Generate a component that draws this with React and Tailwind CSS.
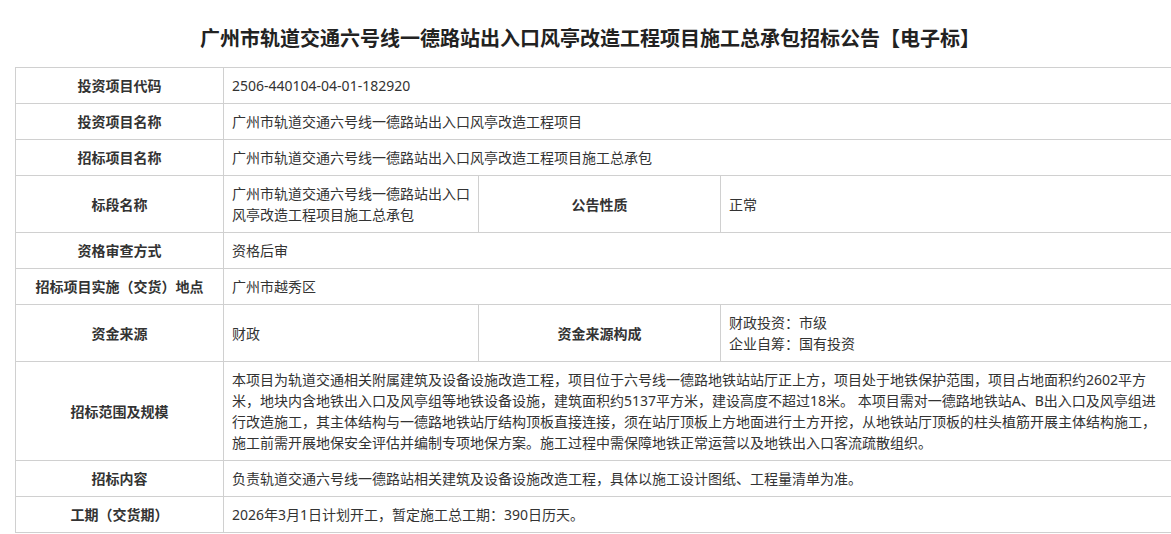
import React from 'react';

// 招标公告详情表
const th = 'border border-[#d0d0d0] px-2 py-[7px] text-center font-bold text-[#333] align-middle';
const td = 'border border-[#d0d0d0] px-2 py-[7px] text-left text-[#333] align-middle';

const App = () => {
    return (
        <div
            className="w-full overflow-hidden bg-white text-[14px] leading-[21px] text-[#333]"
            style={{ fontFamily: '"Noto Sans", "Noto Sans CJK SC", sans-serif' }}
        >
            <div className="ml-[15px] w-[1150px] pt-[24px]">
                <h1 className="text-center text-[20px] leading-[30px] font-bold text-[#222] mb-[13px]">
                    广州市轨道交通六号线一德路站出入口风亭改造工程项目施工总承包招标公告【电子标】
                </h1>
                <table className="w-[1158px] border-collapse table-fixed">
                    <colgroup>
                        <col className="w-[208px]" />
                        <col className="w-[255px]" />
                        <col className="w-[242px]" />
                        <col />
                    </colgroup>
                    <tbody>
                        <tr>
                            <td className={th}>投资项目代码</td>
                            <td className={td} colSpan={3}>2506-440104-04-01-182920</td>
                        </tr>
                        <tr>
                            <td className={th}>投资项目名称</td>
                            <td className={td} colSpan={3}>广州市轨道交通六号线一德路站出入口风亭改造工程项目</td>
                        </tr>
                        <tr>
                            <td className={th}>招标项目名称</td>
                            <td className={td} colSpan={3}>广州市轨道交通六号线一德路站出入口风亭改造工程项目施工总承包</td>
                        </tr>
                        <tr>
                            <td className={th}>标段名称</td>
                            <td className={td}>广州市轨道交通六号线一德路站出入口风亭改造工程项目施工总承包</td>
                            <td className={th}>公告性质</td>
                            <td className={td}>正常</td>
                        </tr>
                        <tr>
                            <td className={th}>资格审查方式</td>
                            <td className={td} colSpan={3}>资格后审</td>
                        </tr>
                        <tr>
                            <td className={th}>招标项目实施（交货）地点</td>
                            <td className={td} colSpan={3}>广州市越秀区</td>
                        </tr>
                        <tr>
                            <td className={th}>资金来源</td>
                            <td className={td}>财政</td>
                            <td className={th}>资金来源构成</td>
                            <td className={td}>
                                <div>财政投资：市级</div>
                                <div>企业自筹：国有投资</div>
                            </td>
                        </tr>
                        <tr>
                            <td className={th}>招标范围及规模</td>
                            <td className={td} colSpan={3}>
                                本项目为轨道交通相关附属建筑及设备设施改造工程，项目位于六号线一德路地铁站站厅正上方，项目处于地铁保护范围，项目占地面积约2602平方米，地块内含地铁出入口及风亭组等地铁设备设施，建筑面积约5137平方米，建设高度不超过18米。 本项目需对一德路地铁站A、B出入口及风亭组进行改造施工，其主体结构与一德路地铁站厅结构顶板直接连接，须在站厅顶板上方地面进行土方开挖，从地铁站厅顶板的柱头植筋开展主体结构施工，施工前需开展地保安全评估并编制专项地保方案。施工过程中需保障地铁正常运营以及地铁出入口客流疏散组织。
                            </td>
                        </tr>
                        <tr>
                            <td className={th}>招标内容</td>
                            <td className={td} colSpan={3}>负责轨道交通六号线一德路站相关建筑及设备设施改造工程，具体以施工设计图纸、工程量清单为准。</td>
                        </tr>
                        <tr>
                            <td className={th}>工期（交货期）</td>
                            <td className={td} colSpan={3}>2026年3月1日计划开工，暂定施工总工期：390日历天。</td>
                        </tr>
                    </tbody>
                </table>
            </div>
        </div>
    );
};

export default App;
